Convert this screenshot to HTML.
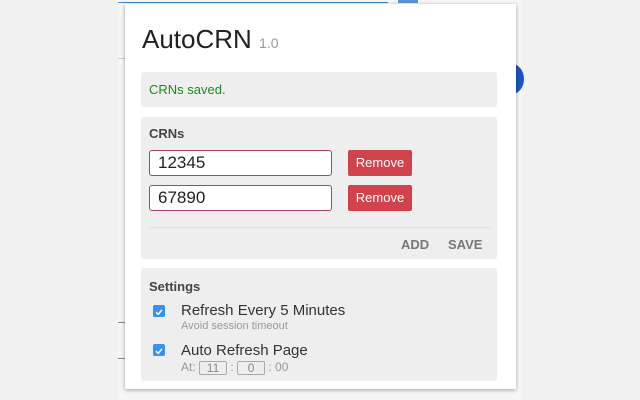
<!DOCTYPE html>
<html><head><style>
*{margin:0;padding:0;box-sizing:border-box}
body{width:640px;height:400px;background:#f1f1f1;position:relative;overflow:hidden;font-family:"Liberation Sans",Arial,sans-serif}
.a{position:absolute}
.box{position:absolute;background:#eeeeee;border-radius:3px}
.in{position:absolute;background:#fff;border:1px solid #b04070;border-radius:3px;font-size:17px;color:#222;padding-left:8px;line-height:24px}
.btn{position:absolute;background:#d1434a;border-radius:2px;color:#fff;font-size:13px;text-align:center;line-height:26px}
.cb{position:absolute;width:12px;height:12px;background:#3a8ff0;border-radius:2px}
.tb{display:inline-block;border:1px solid #aaa;border-radius:2px;height:14px;line-height:12px;text-align:center;vertical-align:middle;color:#888}
</style></head><body>
<div class="a" style="left:118px;top:0;width:404px;height:400px;background:#f6f6f6"></div>
<div class="a" style="left:118px;top:0;width:270px;height:3px;border-bottom:1px solid #3a8ad8"></div>
<div class="a" style="left:398px;top:0;width:20px;height:3px;background:#5a93dc"></div>
<div class="a" style="left:500px;top:64px;width:24px;height:30px;border-radius:50%;background:#1a55c8"></div>
<div class="a" style="left:118px;top:58px;width:8px;height:1px;background:#ccc"></div>
<div class="a" style="left:118px;top:322px;width:8px;height:1px;background:#888"></div>
<div class="a" style="left:118px;top:358px;width:8px;height:1px;background:#888"></div>
<div class="a" style="left:125px;top:4px;width:391px;height:385px;background:#fff;box-shadow:0 1px 4px rgba(0,0,0,.35)"></div>
<div class="a" style="left:142px;top:24px;font-size:26px;color:#222;line-height:30px">AutoCRN <span style="font-size:14px;color:#999">1.0</span></div>
<div class="box" style="left:141px;top:72px;width:356px;height:35px"></div>
<div class="a" style="left:149px;top:82px;font-size:13px;color:#1a8a1a">CRNs saved.</div>
<div class="box" style="left:141px;top:117px;width:356px;height:142px"></div>
<div class="a" style="left:149px;top:126px;font-size:13px;font-weight:bold;color:#444">CRNs</div>
<div class="in" style="left:149px;top:150px;width:183px;height:26px">12345</div>
<div class="in" style="left:149px;top:185px;width:183px;height:26px">67890</div>
<div class="btn" style="left:348px;top:150px;width:64px;height:26px">Remove</div>
<div class="btn" style="left:348px;top:185px;width:64px;height:26px">Remove</div>
<div class="a" style="left:149px;top:227px;width:341px;height:1px;background:#ddd"></div>
<div class="a" style="left:401px;top:237px;font-size:13px;font-weight:bold;color:#777">ADD</div>
<div class="a" style="left:448px;top:237px;font-size:13px;font-weight:bold;color:#777">SAVE</div>
<div class="box" style="left:141px;top:268px;width:356px;height:113px"></div>
<div class="a" style="left:149px;top:279px;font-size:13px;font-weight:bold;color:#444">Settings</div>
<div class="cb" style="left:153px;top:305px"><svg width="12" height="12"><path d="M3 6.2 L5.2 8.4 L9 3.8" stroke="#fff" stroke-width="1.5" fill="none"/></svg></div>
<div class="a" style="left:181px;top:302px;font-size:15px;color:#333">Refresh Every 5 Minutes</div>
<div class="a" style="left:181px;top:320px;font-size:11px;color:#999">Avoid session timeout</div>
<div class="cb" style="left:153px;top:344px"><svg width="12" height="12"><path d="M3 6.2 L5.2 8.4 L9 3.8" stroke="#fff" stroke-width="1.5" fill="none"/></svg></div>
<div class="a" style="left:181px;top:342px;font-size:15px;color:#333">Auto Refresh Page</div>
<div class="a" style="left:181px;top:359px;font-size:12px;color:#999;line-height:16px">At: <span class="tb" style="width:28px">11</span> : <span class="tb" style="width:28px">0</span> : 00</div>
</body></html>
